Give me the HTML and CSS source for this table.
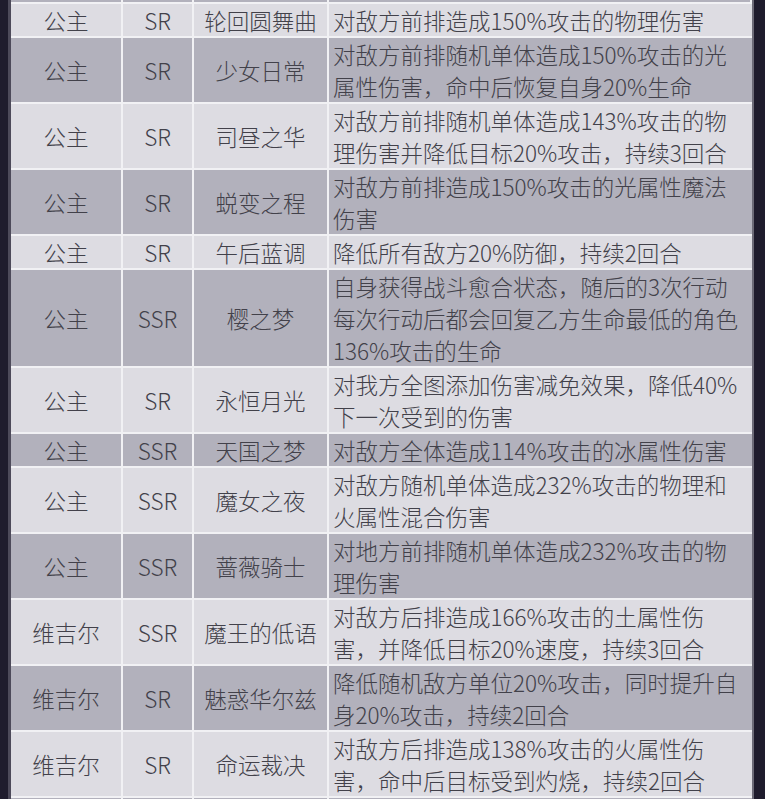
FILE: index.html
```html
<!DOCTYPE html>
<html lang="zh-CN">
<head>
<meta charset="utf-8">
<link rel="stylesheet" href="styles.css">
</head>
<body>
<div class="frame">
<table class="skills">
<colgroup><col class="c-role"><col class="c-rank"><col class="c-name"><col class="c-desc"></colgroup>
<tbody>
<tr class="dark cut"><td></td><td></td><td></td><td></td></tr>
<tr><td>公主</td><td>SR</td><td>轮回圆舞曲</td><td class="desc">对敌方前排造成150%攻击的物理伤害</td></tr>
<tr class="dark"><td>公主</td><td>SR</td><td>少女日常</td><td class="desc">对敌方前排随机单体造成150%攻击的光<br>属性伤害，命中后恢复自身20%生命</td></tr>
<tr><td>公主</td><td>SR</td><td>司昼之华</td><td class="desc">对敌方前排随机单体造成143%攻击的物<br>理伤害并降低目标20%攻击，持续3回合</td></tr>
<tr class="dark"><td>公主</td><td>SR</td><td>蜕变之程</td><td class="desc">对敌方前排造成150%攻击的光属性魔法<br>伤害</td></tr>
<tr><td>公主</td><td>SR</td><td>午后蓝调</td><td class="desc">降低所有敌方20%防御，持续2回合</td></tr>
<tr class="dark"><td>公主</td><td>SSR</td><td>樱之梦</td><td class="desc">自身获得战斗愈合状态，随后的3次行动<br>每次行动后都会回复乙方生命最低的角色<br>136%攻击的生命</td></tr>
<tr><td>公主</td><td>SR</td><td>永恒月光</td><td class="desc">对我方全图添加伤害减免效果，降低40%<br>下一次受到的伤害</td></tr>
<tr class="dark"><td>公主</td><td>SSR</td><td>天国之梦</td><td class="desc">对敌方全体造成114%攻击的冰属性伤害</td></tr>
<tr><td>公主</td><td>SSR</td><td>魔女之夜</td><td class="desc">对敌方随机单体造成232%攻击的物理和<br>火属性混合伤害</td></tr>
<tr class="dark"><td>公主</td><td>SSR</td><td>蔷薇骑士</td><td class="desc">对地方前排随机单体造成232%攻击的物<br>理伤害</td></tr>
<tr><td>维吉尔</td><td>SSR</td><td>魔王的低语</td><td class="desc">对敌方后排造成166%攻击的土属性伤<br>害，并降低目标20%速度，持续3回合</td></tr>
<tr class="dark"><td>维吉尔</td><td>SR</td><td>魅惑华尔兹</td><td class="desc">降低随机敌方单位20%攻击，同时提升自<br>身20%攻击，持续2回合</td></tr>
<tr><td>维吉尔</td><td>SR</td><td>命运裁决</td><td class="desc">对敌方后排造成138%攻击的火属性伤<br>害，命中后目标受到灼烧，持续2回合</td></tr>
<tr class="dark"><td>&nbsp;</td><td>&nbsp;</td><td>&nbsp;</td><td class="desc">&nbsp;</td></tr>
</tbody>
</table>
</div>
</body>
</html>
```
FILE: styles.css
```css
html, body {
  margin: 0;
  padding: 0;
  background: #1f1c2d;
}
body {
  font-family: "Noto Sans CJK SC", "Noto Sans", sans-serif;
  height: 799px;
  overflow: hidden;
}
.frame {
  padding-left: 8px;
}
.skills {
  width: 746px;
  table-layout: fixed;
  border-collapse: separate;
  border-spacing: 0;
  border-left: 3px solid #4d4a5a;
  border-right: 2px solid #6d6b78;
  font-size: 22.5px;
  font-weight: 300;
  line-height: 32px;
  color: #42414a;
}
.c-role { width: 112px; }
.c-rank { width: 71px; }
.c-name { width: 135px; }
.c-desc { width: 423px; }
.skills td {
  box-sizing: border-box;
  padding: 0;
  text-align: center;
  vertical-align: middle;
  background: #dddce2;
  border-right: 2px solid #f1f1f4;
  border-bottom: 2px solid #f1f1f4;
  white-space: nowrap;
}
.skills td.desc {
  text-align: left;
  padding-left: 4px;
  border-right: 0;
}
.skills tr.dark td {
  background: #b2b1bc;
}
.skills tr.cut td {
  height: 4px;
  line-height: 2px;
}
```
